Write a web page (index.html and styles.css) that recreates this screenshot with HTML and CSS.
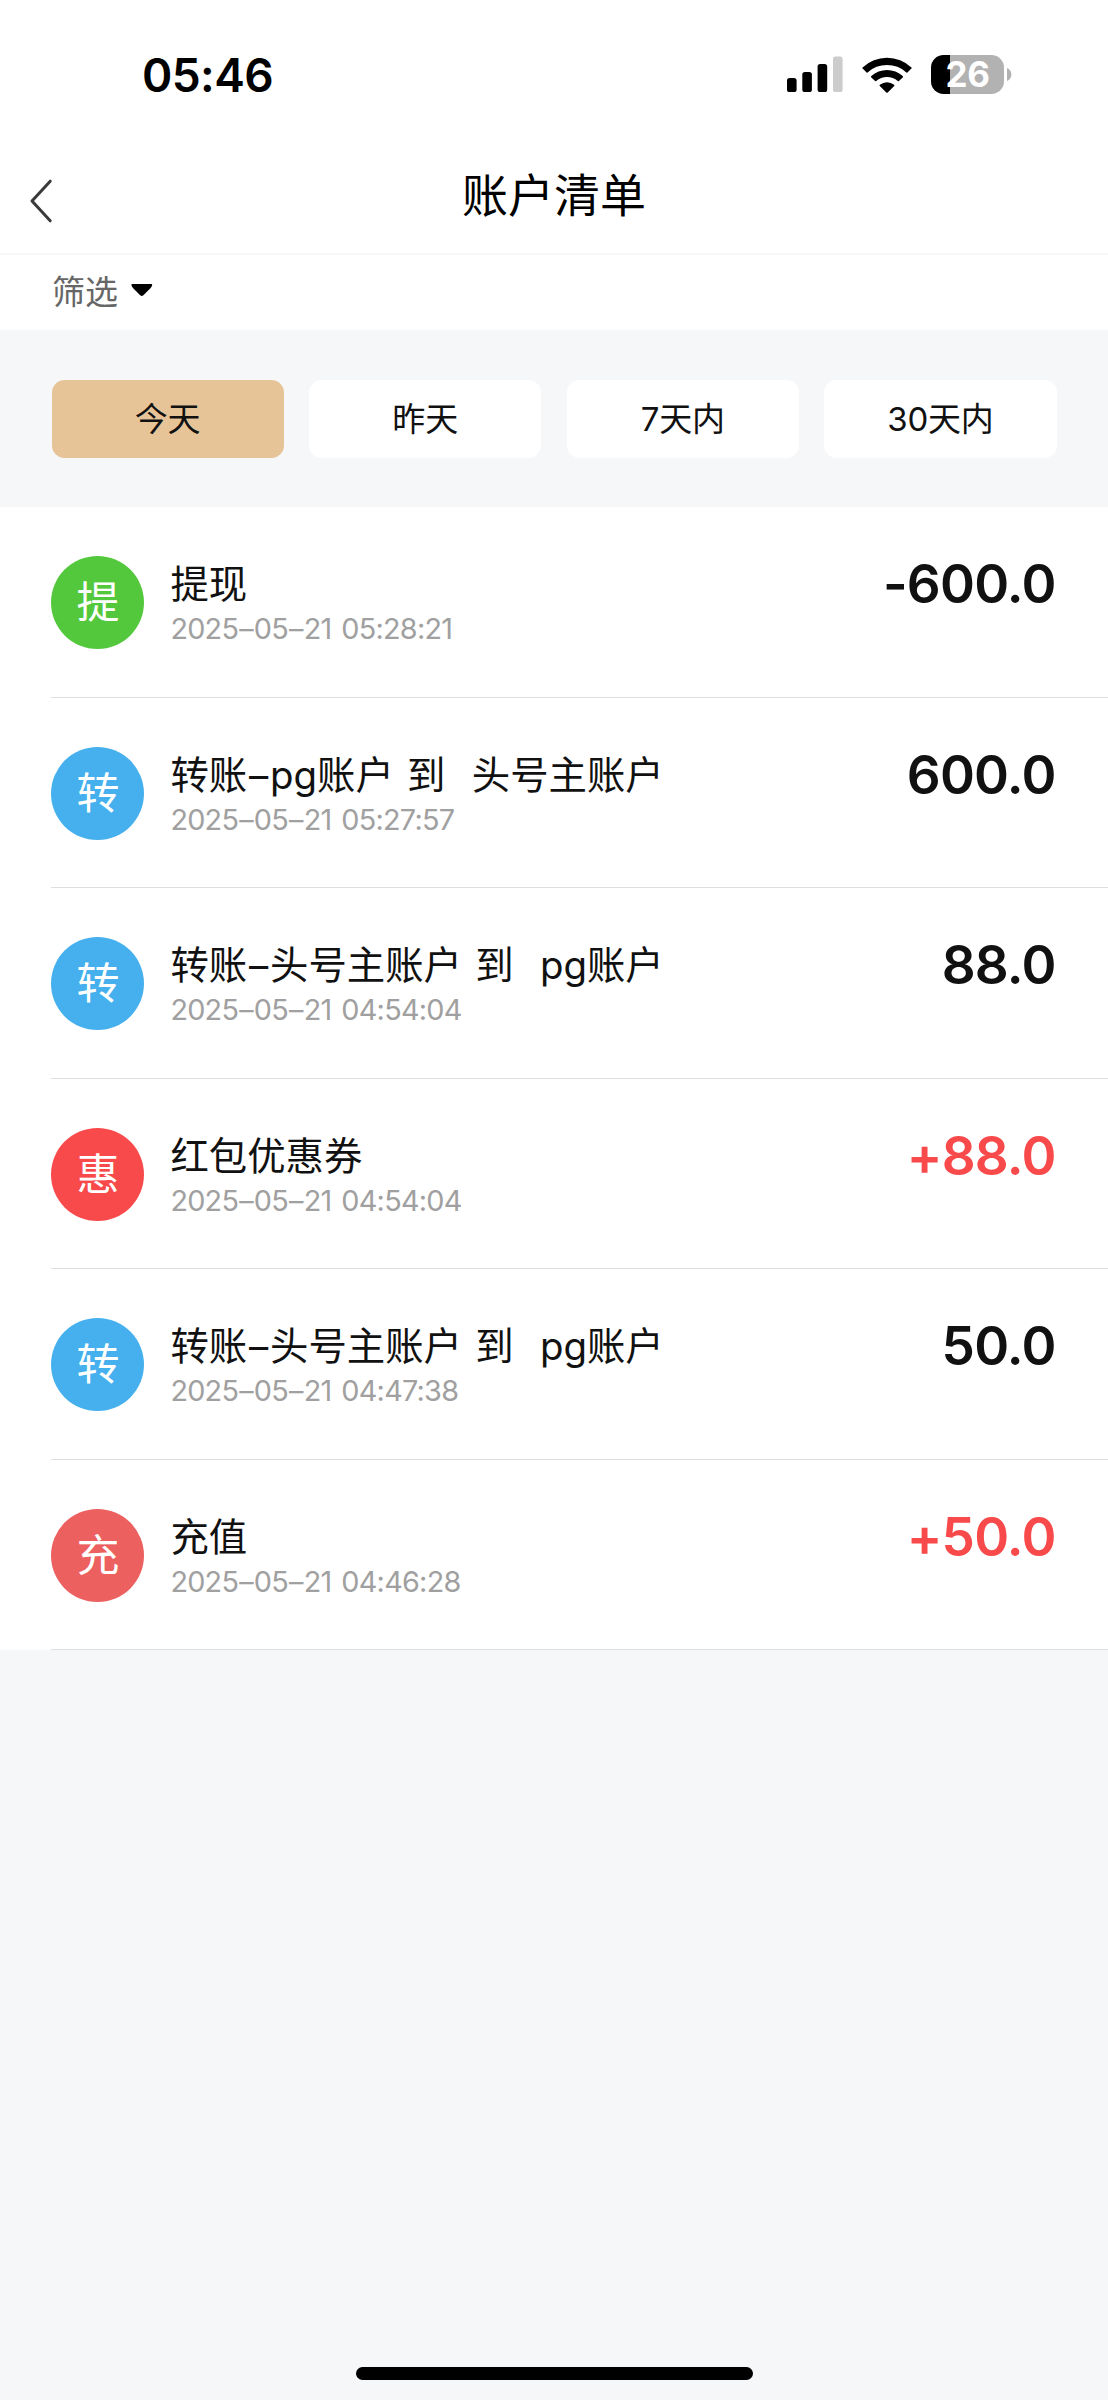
FILE: index.html
```html
<!DOCTYPE html>
<html lang="zh-CN">
<head>
<meta charset="utf-8">
<title>账户清单</title>
<link rel="stylesheet" href="styles.css">
</head>
<body>
<div class="screen">
  <div class="status">
    <span class="time">05:46</span>
    <div class="indicators">
      <svg class="signal" width="56" height="36" viewBox="0 0 56 36">
        <rect x="0" y="22" width="9.6" height="14" rx="2.6"/>
        <rect x="15.3" y="16" width="9.6" height="20" rx="2.6"/>
        <rect x="30.6" y="8" width="9.6" height="28" rx="2.6"/>
        <rect x="46" y="0.6" width="9.6" height="35.4" rx="2.6" fill="#ccc"/>
      </svg>
      <svg class="wifi" width="50" height="37" viewBox="0 0 50 37">
        <path d="M0.6 11.4 A35.5 35.5 0 0 1 49.4 11.4 Q50 12 49.4 12.6 L45.4 16.6 Q45 17 44.4 16.5 A28.5 28.5 0 0 0 5.6 16.5 Q5 17 4.6 16.6 L0.6 12.6 Q0 12 0.6 11.4Z"/>
        <path d="M9.3 20 A23.2 23.2 0 0 1 40.7 20 Q41.4 20.7 40.7 21.4 L36.9 25.1 Q36.4 25.6 35.8 25.1 A16 16 0 0 0 14.2 25.1 Q13.6 25.6 13.1 25.1 L9.3 21.4 Q8.6 20.7 9.3 20Z"/>
        <path d="M17.9 28.8 A11 11 0 0 1 32.1 28.8 Q32.9 29.4 32.2 30.1 L25.7 36.4 Q25 37 24.3 36.4 L17.8 30.1 Q17.1 29.4 17.9 28.8Z"/>
      </svg>
      <div class="battery">
        <div class="cell">26</div>
        <svg width="5" height="13" viewBox="0 0 5 13"><path d="M0 0C2.6 1 4.4 3.5 4.4 6.5S2.6 12 0 13Z" fill="#b2b2b2"/></svg>
      </div>
    </div>
  </div>
  <header class="nav">
    <svg class="back" width="26" height="46" viewBox="0 0 26 46"><path d="M22.2 3.2 4 23 22.2 42.8" fill="none" stroke="#3a3a3a" stroke-width="3" stroke-linecap="round" stroke-linejoin="round"/></svg>
    <h1>账户清单</h1>
  </header>
  <div class="filter">
    <span>筛选</span>
    <svg width="22" height="13" viewBox="0 0 22 13"><path d="M1.2 0H20.4Q21.4 0 21.2 1 20.8 3 19.4 4.2L12.4 11.2Q10.8 12.6 9.2 11.2L2.2 4.2Q.8 3 .4 1 .2 0 1.2 0Z"/></svg>
  </div>
  <div class="ranges">
    <div class="range active">今天</div>
    <div class="range">昨天</div>
    <div class="range">7天内</div>
    <div class="range">30天内</div>
  </div>
  <main class="list">
    <div class="row">
      <div class="badge green">提</div>
      <div class="info"><div class="name">提现</div><div class="date">2025<span class="dash">–</span>05<span class="dash">–</span>21 05:28:21</div></div>
      <div class="amount">-600.0</div>
    </div>
    <div class="row">
      <div class="badge blue">转</div>
      <div class="info"><div class="name">转账<span class="dash">–</span>pg账户 到  头号主账户</div><div class="date">2025<span class="dash">–</span>05<span class="dash">–</span>21 05:27:57</div></div>
      <div class="amount">600.0</div>
    </div>
    <div class="row">
      <div class="badge blue">转</div>
      <div class="info"><div class="name">转账<span class="dash">–</span>头号主账户 到  pg账户</div><div class="date">2025<span class="dash">–</span>05<span class="dash">–</span>21 04:54:04</div></div>
      <div class="amount">88.0</div>
    </div>
    <div class="row">
      <div class="badge red">惠</div>
      <div class="info"><div class="name">红包优惠券</div><div class="date">2025<span class="dash">–</span>05<span class="dash">–</span>21 04:54:04</div></div>
      <div class="amount plus">+88.0</div>
    </div>
    <div class="row">
      <div class="badge blue">转</div>
      <div class="info"><div class="name">转账<span class="dash">–</span>头号主账户 到  pg账户</div><div class="date">2025<span class="dash">–</span>05<span class="dash">–</span>21 04:47:38</div></div>
      <div class="amount">50.0</div>
    </div>
    <div class="row">
      <div class="badge coral">充</div>
      <div class="info"><div class="name">充值</div><div class="date">2025<span class="dash">–</span>05<span class="dash">–</span>21 04:46:28</div></div>
      <div class="amount plus">+50.0</div>
    </div>
  </main>
  <div class="home"></div>
</div>
</body>
</html>
```
FILE: styles.css
```css
* { box-sizing: border-box; }
body {
  margin: 0;
  font-family: Inter, "Noto Sans CJK SC", sans-serif;
  color: #111;
  background: #f6f7f9;
}
.screen {
  width: 1108px;
  height: 2400px;
  display: flex;
  flex-direction: column;
  background: #f6f7f9;
}
.status {
  height: 148px;
  background: #fff;
  display: flex;
  justify-content: space-between;
  align-items: center;
  padding: 0 96px 0 142px;
}
.time {
  padding-top: 2px;
  font-size: 46px;
  font-weight: 600;
  color: #000;
  letter-spacing: -0.6px;
}
.indicators { display: flex; align-items: center; }
.wifi { margin-left: 19px; }
.battery { display: flex; align-items: center; gap: 3px; margin-left: 19px; }
.cell {
  width: 73px;
  height: 39px;
  border-radius: 12.5px;
  background: linear-gradient(90deg, #000 19px, #b2b2b2 19px);
  color: #fff;
  font-size: 35px;
  font-weight: 700;
  line-height: 39px;
  text-align: center;
  letter-spacing: -0.5px;
}
.nav {
  height: 107px;
  background: #fff;
  border-bottom: 2px solid #f6f7f9;
  display: grid;
  grid-template-columns: 80px 1fr 80px;
  align-items: center;
}
.back { margin: 1px 0 0 28px; }
h1 {
  margin: 0 0 12px;
  font-size: 46px;
  font-weight: 400;
  line-height: 60px;
  text-align: center;
  color: #000;
}
.filter {
  height: 75px;
  background: #fff;
  display: flex;
  align-items: center;
  gap: 13px;
  padding: 0 52px 4px;
  font-size: 33px;
  color: #666;
}
.filter span { margin-top: -2px; }
.ranges {
  height: 177px;
  display: grid;
  grid-template-columns: repeat(4, 1fr);
  gap: 25.6px;
  padding: 50px 51.5px 49.5px;
}
.range {
  border-radius: 12.5px;
  background: #fff;
  display: flex;
  align-items: center;
  justify-content: center;
  padding-bottom: 3px;
  font-size: 33px;
  font-weight: 400;
  letter-spacing: -0.2px;
}
.active { background: #e6c497; }
.list { background: #fff; }
.row {
  height: 190.5px;
  margin-left: 51.4px;
  padding: 49px 52.4px 0 0;
  border-bottom: 1px solid #dfdfdf;
  display: flex;
}
.badge {
  width: 93px;
  height: 93px;
  border-radius: 50%;
  color: #fff;
  font-size: 43px;
  line-height: 93px;
  text-align: center;
}
.green { background: #54c83d; }
.blue { background: #45b0ed; }
.red { background: #f94a4b; }
.coral { background: #ed6060; }
.info { margin-left: 26px; white-space: pre; }
.name { font-size: 38.4px; line-height: 56px; word-spacing: 2.4px; }
.name .dash { padding: 0 1.8px; }
.date {
  font-size: 28.8px;
  line-height: 33px;
  font-weight: 400;
  letter-spacing: -0.75px;
  word-spacing: 2.5px;
  color: #a0a0a0;
}
.date .dash { padding: 0 1px; }
.amount {
  margin-left: auto;
  font-size: 53px;
  font-weight: 600;
  line-height: 56px;
  letter-spacing: -0.8px;
}
.plus { color: #f94a4b; }
.home {
  width: 397px;
  height: 13px;
  border-radius: 7px;
  background: #000;
  margin: auto auto 20px;
}
```
